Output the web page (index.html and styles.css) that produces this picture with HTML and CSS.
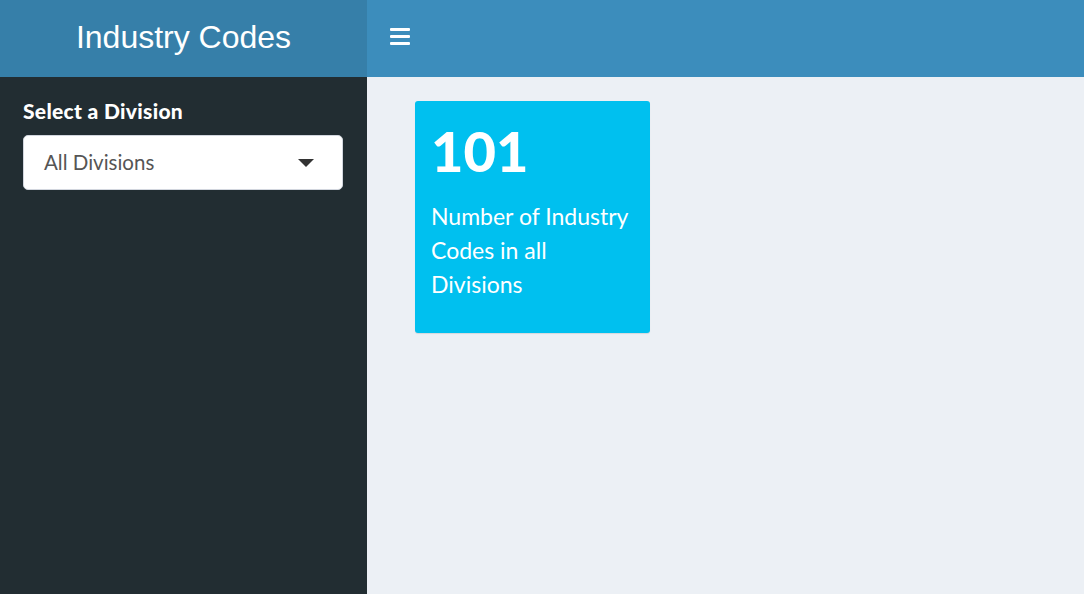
FILE: index.html
```html
<!DOCTYPE html>
<html>
<head>
<meta charset="utf-8">
<link rel="stylesheet" href="styles.css">
</head>
<body>
<div class="app">
  <header class="header">
    <div class="logo">Industry Codes</div>
    <nav class="navbar">
      <span class="toggle" aria-label="Toggle navigation">
        <span class="bar"></span><span class="bar"></span><span class="bar"></span>
      </span>
    </nav>
  </header>
  <div class="body">
    <aside class="sidebar">
      <label class="label">Select a Division</label>
      <div class="select">
        <span class="select-text">All Divisions</span>
        <span class="caret"></span>
      </div>
    </aside>
    <main class="content">
      <div class="valuebox">
        <div class="value">101</div>
        <div class="desc">Number of Industry Codes in all Divisions</div>
      </div>
    </main>
  </div>
</div>
</body>
</html>
```
FILE: styles.css
```css
html, body {
  margin: 0;
  padding: 0;
  height: 100%;
}
body {
  font-family: Lato, "Open Sans", sans-serif;
  background: #ecf0f5;
}
.app {
  display: flex;
  flex-direction: column;
  height: 594px;
}
.header {
  display: flex;
  height: 77px;
  flex: none;
}
.logo {
  width: 367px;
  background: #367fa9;
  color: #fff;
  font-family: "Liberation Sans", Arial, sans-serif;
  font-size: 32px;
  display: flex;
  align-items: center;
  justify-content: center;
  padding-bottom: 3px;
  box-sizing: border-box;
}
.navbar {
  flex: 1;
  background: #3c8dbc;
  display: flex;
  align-items: center;
  padding-left: 23px;
}
.toggle {
  display: flex;
  flex-direction: column;
  gap: 4px;
  width: 20px;
  margin-top: -5px;
}
.bar {
  display: block;
  height: 3px;
  background: #fff;
  border-radius: 1px;
}
.body {
  flex: 1;
  display: flex;
}
.sidebar {
  width: 367px;
  flex: none;
  background: #222d32;
  box-sizing: border-box;
  padding: 21px 24px 0 23px;
}
.label {
  display: block;
  color: #fff;
  font-weight: 900;
  font-size: 21px;
  letter-spacing: 0.3px;
  line-height: 26px;
  margin-bottom: 11px;
}
.select {
  height: 55px;
  background: #fff;
  border: 1px solid #d2d6de;
  border-radius: 5px;
  box-sizing: border-box;
  display: flex;
  align-items: center;
  justify-content: space-between;
  padding: 0 28px 2px 20px;
}
.select-text {
  color: #555;
  font-size: 20.5px;
}
.caret {
  width: 0;
  height: 0;
  border-left: 8px solid transparent;
  border-right: 8px solid transparent;
  border-top: 8px solid #333;
  margin-top: 2px;
}
.content {
  flex: 1;
  padding: 24px 48px;
}
.valuebox {
  width: 235px;
  height: 232px;
  background: #00c0ef;
  border-radius: 3px;
  box-shadow: 0 1px 1px rgba(0,0,0,0.1);
  color: #fff;
  padding: 16px 16px 0 16px;
  box-sizing: border-box;
}
.value {
  font-size: 56px;
  font-weight: 900;
  line-height: 68px;
  margin-bottom: 14px;
}
.desc {
  font-size: 23px;
  line-height: 34px;
}
```
